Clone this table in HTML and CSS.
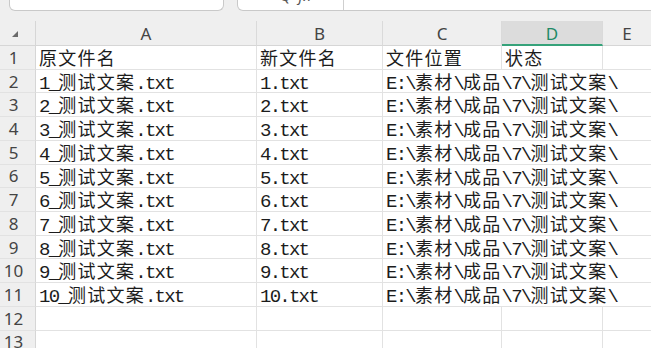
FILE: index.html
```html
<!DOCTYPE html>
<html lang="zh-CN">
<head>
<meta charset="utf-8">
<title>重命名列表</title>
<link rel="stylesheet" href="styles.css">
</head>
<body>
<div class="toolbar">
  <div class="namebox"></div>
  <div class="formula">
    <span class="fx-tools">Q&nbsp;&nbsp;fx</span>
    <span class="fsep"></span>
  </div>
</div>

<div class="sheet">
  <!-- column headers -->
  <div class="corner"><svg width="6" height="6" viewBox="0 0 6 6"><polygon points="6,0 6,6 0,6" fill="#6a6a6a"/></svg></div>
  <div class="ch">A</div>
  <div class="ch">B</div>
  <div class="ch">C</div>
  <div class="ch sel">D</div>
  <div class="ch last">E</div>

  <!-- row 1 -->
  <div class="rh">1</div>
  <div class="c">原文件名</div>
  <div class="c">新文件名</div>
  <div class="c">文件位置</div>
  <div class="c">状态</div>
  <div class="c last"></div>

  <div class="rh">2</div>
  <div class="c"><span class="l">1_</span>测试文案<span class="l">.txt</span></div>
  <div class="c"><span class="l">1.txt</span></div>
  <div class="c span3"><span class="l">E:\</span>素材<span class="l">\</span>成品<span class="l">\7\</span>测试文案<span class="l">\</span></div>

  <div class="rh">3</div>
  <div class="c"><span class="l">2_</span>测试文案<span class="l">.txt</span></div>
  <div class="c"><span class="l">2.txt</span></div>
  <div class="c span3"><span class="l">E:\</span>素材<span class="l">\</span>成品<span class="l">\7\</span>测试文案<span class="l">\</span></div>

  <div class="rh">4</div>
  <div class="c"><span class="l">3_</span>测试文案<span class="l">.txt</span></div>
  <div class="c"><span class="l">3.txt</span></div>
  <div class="c span3"><span class="l">E:\</span>素材<span class="l">\</span>成品<span class="l">\7\</span>测试文案<span class="l">\</span></div>

  <div class="rh">5</div>
  <div class="c"><span class="l">4_</span>测试文案<span class="l">.txt</span></div>
  <div class="c"><span class="l">4.txt</span></div>
  <div class="c span3"><span class="l">E:\</span>素材<span class="l">\</span>成品<span class="l">\7\</span>测试文案<span class="l">\</span></div>

  <div class="rh">6</div>
  <div class="c"><span class="l">5_</span>测试文案<span class="l">.txt</span></div>
  <div class="c"><span class="l">5.txt</span></div>
  <div class="c span3"><span class="l">E:\</span>素材<span class="l">\</span>成品<span class="l">\7\</span>测试文案<span class="l">\</span></div>

  <div class="rh">7</div>
  <div class="c"><span class="l">6_</span>测试文案<span class="l">.txt</span></div>
  <div class="c"><span class="l">6.txt</span></div>
  <div class="c span3"><span class="l">E:\</span>素材<span class="l">\</span>成品<span class="l">\7\</span>测试文案<span class="l">\</span></div>

  <div class="rh">8</div>
  <div class="c"><span class="l">7_</span>测试文案<span class="l">.txt</span></div>
  <div class="c"><span class="l">7.txt</span></div>
  <div class="c span3"><span class="l">E:\</span>素材<span class="l">\</span>成品<span class="l">\7\</span>测试文案<span class="l">\</span></div>

  <div class="rh">9</div>
  <div class="c"><span class="l">8_</span>测试文案<span class="l">.txt</span></div>
  <div class="c"><span class="l">8.txt</span></div>
  <div class="c span3"><span class="l">E:\</span>素材<span class="l">\</span>成品<span class="l">\7\</span>测试文案<span class="l">\</span></div>

  <div class="rh">10</div>
  <div class="c"><span class="l">9_</span>测试文案<span class="l">.txt</span></div>
  <div class="c"><span class="l">9.txt</span></div>
  <div class="c span3"><span class="l">E:\</span>素材<span class="l">\</span>成品<span class="l">\7\</span>测试文案<span class="l">\</span></div>

  <div class="rh">11</div>
  <div class="c"><span class="l">10_</span>测试文案<span class="l">.txt</span></div>
  <div class="c"><span class="l">10.txt</span></div>
  <div class="c span3"><span class="l">E:\</span>素材<span class="l">\</span>成品<span class="l">\7\</span>测试文案<span class="l">\</span></div>

  <div class="rh">12</div>
  <div class="c"></div>
  <div class="c"></div>
  <div class="c"></div>
  <div class="c"></div>
  <div class="c last"></div>

  <div class="rh">13</div>
  <div class="c"></div>
  <div class="c"></div>
  <div class="c"></div>
  <div class="c"></div>
  <div class="c last"></div>
</div>
</body>
</html>
```

FILE: styles.css
```css
html, body {
  margin: 0;
  padding: 0;
}

body {
  width: 651px;
  height: 348px;
  overflow: hidden;
  background: #efefef;
  font-family: "Noto Sans", "Open Sans", sans-serif;
}

/* name box + formula bar strip */
.toolbar {
  display: flex;
  gap: 13px;
  height: 11px;
  padding-left: 9px;
  margin-bottom: 10px;
}

.namebox {
  width: 213px;
  background: #fff;
  border: 1px solid #c9c9c9;
  border-top: none;
  border-radius: 0 0 6px 6px;
}

.formula {
  flex: 1;
  margin-right: -12px;
  position: relative;
  background: #fff;
  border: 1px solid #c9c9c9;
  border-top: none;
  border-radius: 0 0 0 6px;
  overflow: hidden;
}

.fx-tools {
  position: absolute;
  left: 42px;
  top: -13px;
  font-size: 15px;
  line-height: 16px;
  color: #555;
  font-style: italic;
}

.fsep {
  position: absolute;
  left: 105px;
  top: 0;
  bottom: 0;
  width: 1px;
  background: #cfcfcf;
}

/* grid */
.sheet {
  display: grid;
  grid-template-columns: 36px 221px 126px 119px 101px 48px;
  grid-template-rows: 25px repeat(13, 23.73px);
  background: #fff;
}

.corner,
.ch,
.rh {
  background: #efefef;
  color: #444;
  font-size: 17px;
  box-sizing: border-box;
}

.corner {
  border-right: 1px solid #d6d6d6;
  border-bottom: 1px solid #d6d6d6;
  padding: 10px 0 0 12px;
}

.corner svg {
  display: block;
}

.ch {
  display: flex;
  align-items: center;
  justify-content: center;
  border-right: 1px solid #dadada;
  border-bottom: 1px solid #d6d6d6;
  padding-top: 1px;
}

.ch.sel {
  background: #dcdcdc;
  color: #1f8a66;
  border-bottom: 2px solid #36a27a;
  padding-top: 2px;
}

.ch.last,
.c.last {
  border-right: none;
}

.rh {
  display: flex;
  align-items: center;
  justify-content: center;
  padding-right: 8px;
  border-right: 1px solid #d6d6d6;
  border-bottom: 1px solid #e2e2e2;
}

.c {
  box-sizing: border-box;
  border-right: 1px solid #e2e2e2;
  border-bottom: 1px solid #e2e2e2;
  padding-left: 3px;
  font-family: "Noto Sans CJK SC", "Noto Sans CJK JP", sans-serif;
  font-size: 18px;
  letter-spacing: 1.25px;
  line-height: 22.7px;
  color: #1c1c1c;
  white-space: nowrap;
  overflow: visible;
}

.c.span3 {
  grid-column: span 3;
  border-right: none;
}

/* half-width Latin runs */
.l {
  font-family: "Liberation Mono", monospace;
  font-size: 19px;
  letter-spacing: -1.77px;
}
```
